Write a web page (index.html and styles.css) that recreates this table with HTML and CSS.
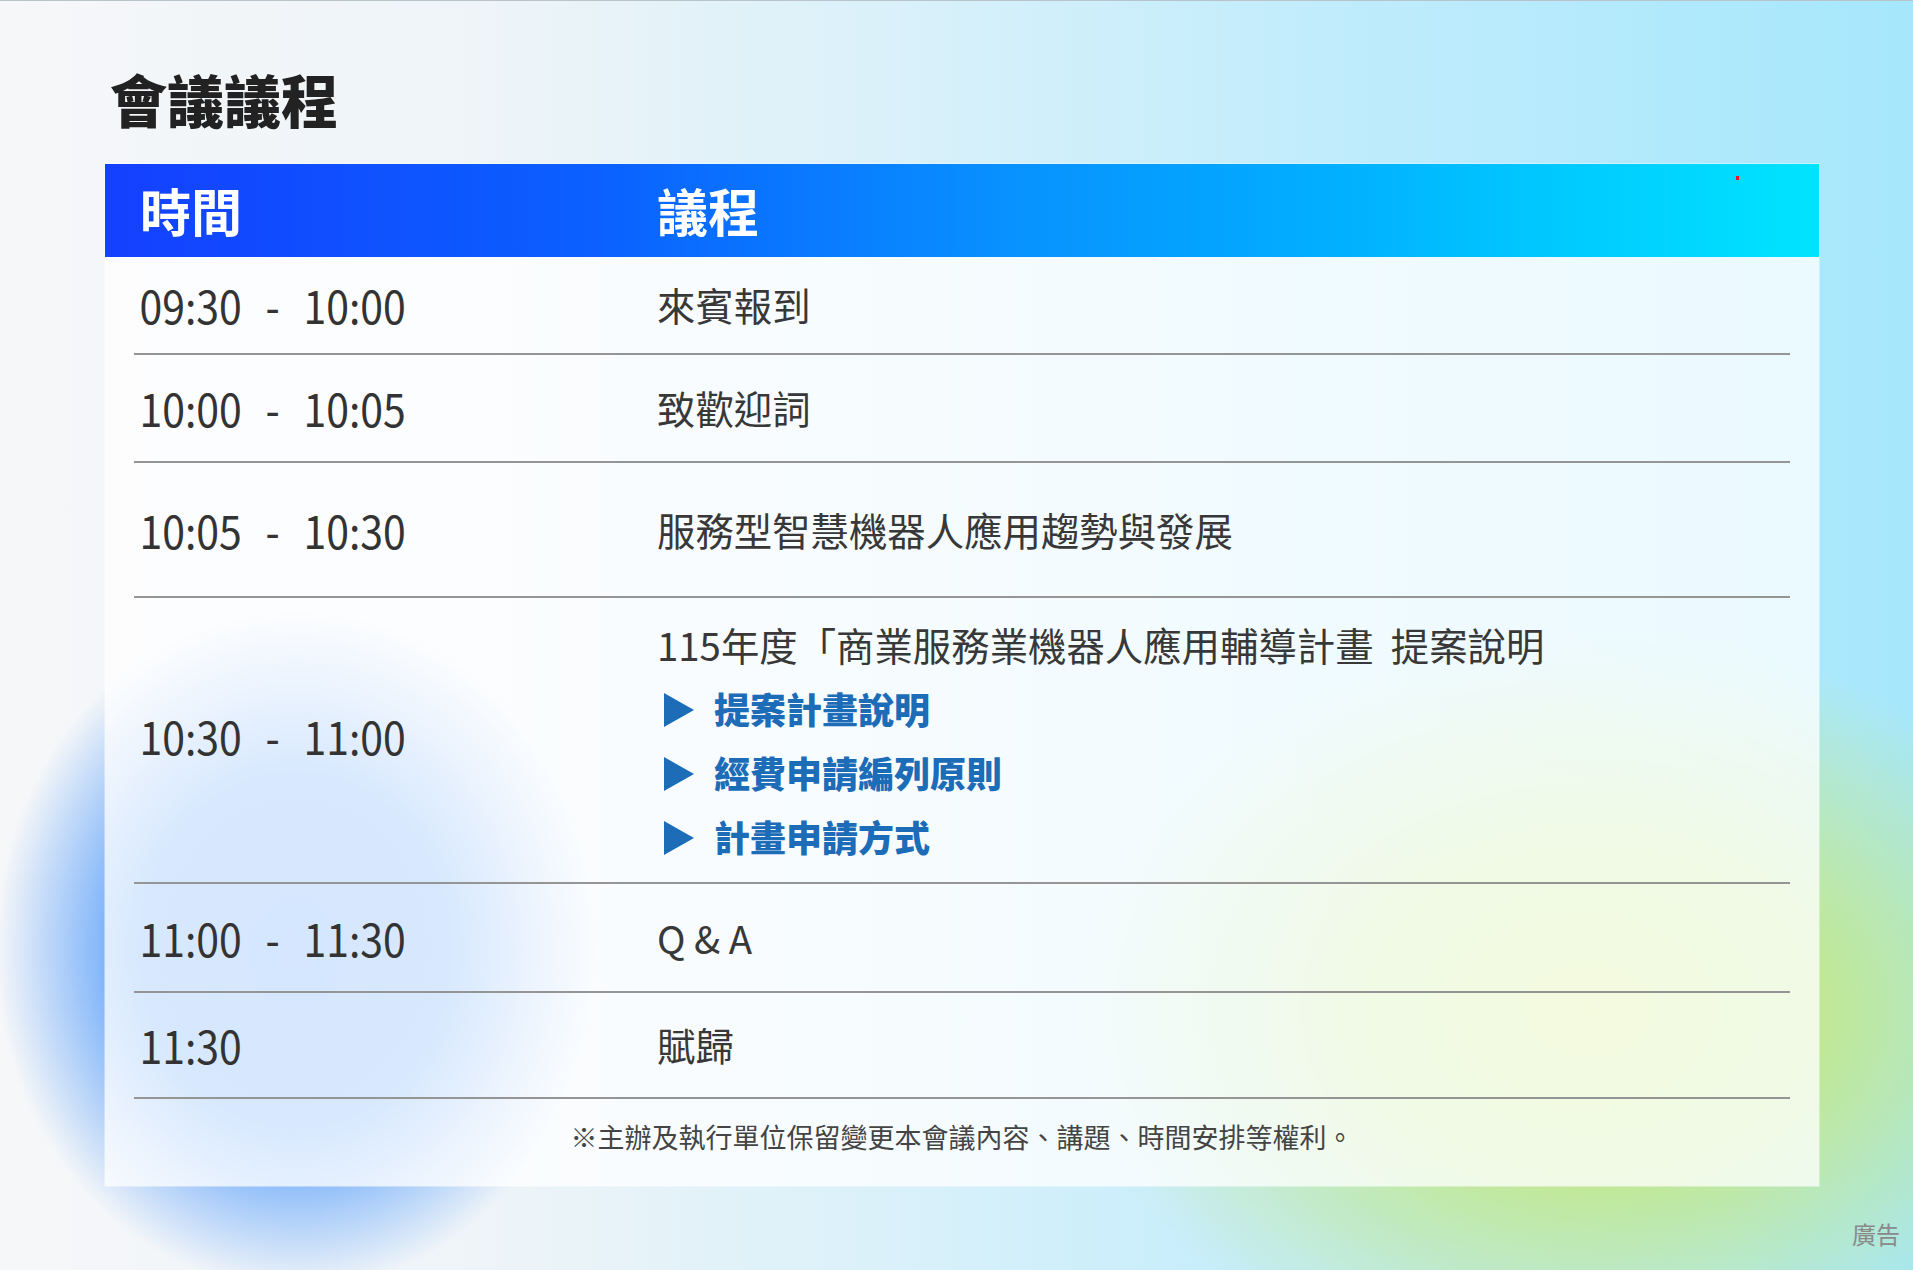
FILE: index.html
```html
<!DOCTYPE html>
<html lang="zh-Hant">
<head>
<meta charset="utf-8">
<title>會議議程</title>
<link rel="stylesheet" href="styles.css">
</head>
<body>
<main class="page">
  <h1 class="title">會議議程</h1>
  <section class="card">
    <div class="head">
      <div class="cell-time">時間</div>
      <div class="cell-agenda">議程</div>
      <span class="dot"></span>
    </div>
    <div class="row r1">
      <div class="time">09:30 - 10:00</div>
      <div class="agenda">來賓報到</div>
    </div>
    <div class="row r2">
      <div class="time">10:00 - 10:05</div>
      <div class="agenda">致歡迎詞</div>
    </div>
    <div class="row r3">
      <div class="time">10:05 - 10:30</div>
      <div class="agenda">服務型智慧機器人應用趨勢與發展</div>
    </div>
    <div class="row r4">
      <div class="time">10:30 - 11:00</div>
      <div class="agenda">
        <div class="main">115年度「商業服務業機器人應用輔導計畫&nbsp; 提案說明</div>
        <ul class="items">
          <li class="item"><svg class="tri" viewBox="0 0 30 34" width="30" height="34"><polygon points="0,0 30,17 0,34" /></svg><span>提案計畫說明</span></li>
          <li class="item"><svg class="tri" viewBox="0 0 30 34" width="30" height="34"><polygon points="0,0 30,17 0,34" /></svg><span>經費申請編列原則</span></li>
          <li class="item"><svg class="tri" viewBox="0 0 30 34" width="30" height="34"><polygon points="0,0 30,17 0,34" /></svg><span>計畫申請方式</span></li>
        </ul>
      </div>
    </div>
    <div class="row r5">
      <div class="time">11:00 - 11:30</div>
      <div class="agenda">Q &amp; A</div>
    </div>
    <div class="row r6">
      <div class="time">11:30</div>
      <div class="agenda">賦歸</div>
    </div>
    <p class="note">※主辦及執行單位保留變更本會議內容、講題、時間安排等權利。</p>
  </section>
  <span class="ad">廣告</span>
</main>
</body>
</html>
```
FILE: styles.css
```css
html, body {
  margin: 0;
  padding: 0;
}

body {
  width: 1913px;
  height: 1270px;
  overflow: hidden;
  font-family: "Noto Sans CJK TC", "Noto Sans", sans-serif;
  color: #333;
  background:
    radial-gradient(ellipse 300px 340px at 295px 950px, rgba(78, 152, 250, 1) 0%, rgba(84, 156, 250, 0.95) 52%, rgba(110, 175, 250, 0) 100%),
    radial-gradient(ellipse 520px 380px at 1590px 1010px, rgba(206, 234, 118, 1) 0%, rgba(196, 232, 132, 0.85) 45%, rgba(180, 230, 170, 0) 100%),
    linear-gradient(90deg, #f6f7f9 0%, #eef4f8 25%, #d6f0fa 50%, #c0ecfc 70%, #a6e7fc 100%);
}

.page {
  position: relative;
  box-sizing: border-box;
  width: 1913px;
  height: 1270px;
  border-top: 1px solid #b8c3ca;
  padding: 69px 94px 0 105px;
}

.title {
  margin: 0 0 37px 5px;
  font-size: 57px;
  line-height: 57px;
  font-weight: 900;
  color: #222;
  letter-spacing: 0;
}

.card {
  width: 1714px;
  background: rgba(255, 255, 255, 0.76);
  box-shadow: 0 0 0 1px rgba(255, 255, 255, 0.35);
}

.head {
  position: relative;
  height: 93px;
  padding: 0 29px;
  display: grid;
  grid-template-columns: 523px 1fr;
  align-items: center;
  background: linear-gradient(90deg, #1440ff 0%, #0b5fff 28%, #0890ff 52%, #02acff 70%, #00c8ff 84%, #00e4ff 100%);
  color: #fff;
  font-size: 51px;
  font-weight: 700;
  line-height: 1.2;
}

.cell-time {
  padding-left: 6px;
}

.dot {
  position: absolute;
  left: 1631px;
  top: 12px;
  width: 3px;
  height: 4px;
  background: #e8102a;
}

.row {
  box-sizing: border-box;
  margin: 0 29px;
  display: grid;
  grid-template-columns: 523px 1fr;
  align-items: center;
  border-bottom: 2px solid #959595;
}

.r1 { height: 98px; }
.r2 { height: 108px; }
.r3 { height: 135px; }
.r4 { height: 286px; }
.r5 { height: 109px; }
.r6 { height: 106px; }

.time {
  padding-left: 6px;
  font-size: 45px;
  line-height: 1.2;
  color: #333;
  word-spacing: 16px;
  transform: scaleX(0.91);
  transform-origin: left center;
  white-space: nowrap;
}

.r4 .time {
  margin-bottom: 8px;
}

.agenda {
  font-size: 38.4px;
  line-height: 1.3;
  color: #383838;
}

.main {
  line-height: 64px;
}

.items {
  list-style: none;
  margin: 0;
  padding: 0 0 0 7px;
}

.item {
  display: flex;
  align-items: center;
  gap: 20px;
  height: 64px;
  font-size: 36px;
  font-weight: 900;
  color: #1c6cb8;
}

.tri {
  fill: #1c6cb8;
  margin-top: 4px;
  flex: none;
}

.note {
  box-sizing: border-box;
  margin: 0;
  height: 87px;
  padding-bottom: 12px;
  display: flex;
  align-items: center;
  justify-content: center;
  font-size: 27px;
  color: #444;
}

.ad {
  position: absolute;
  right: 13px;
  bottom: 24px;
  font-size: 24px;
  line-height: 24px;
  color: #8a8a8a;
}
```
